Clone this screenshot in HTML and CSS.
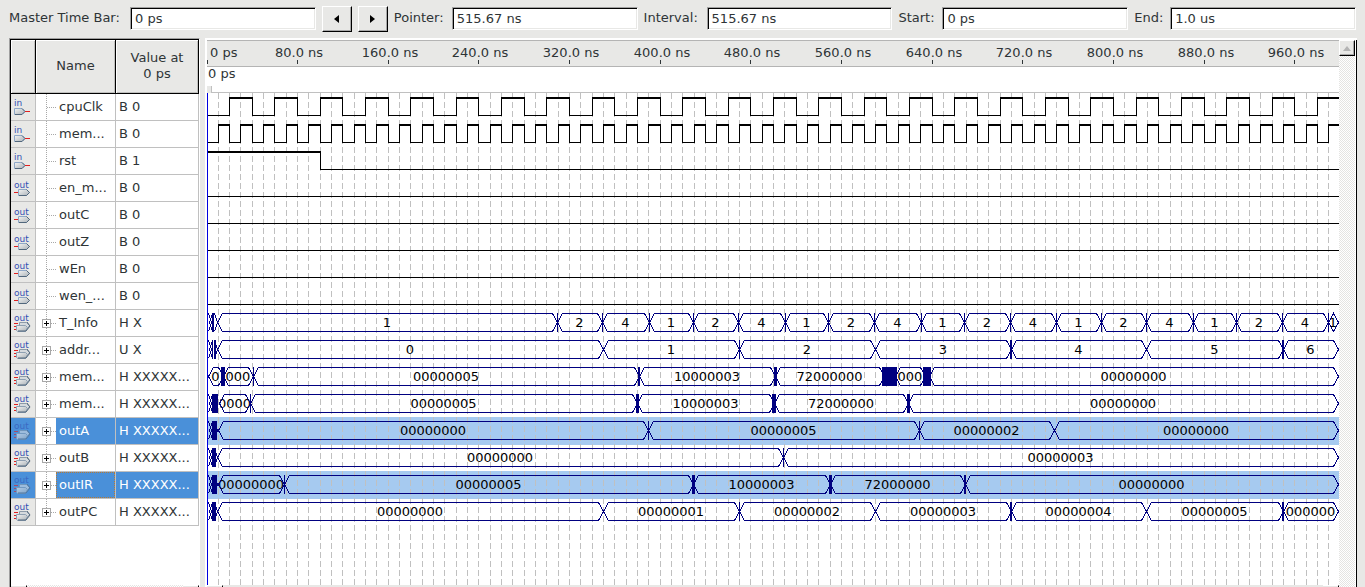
FILE: index.html
```html
<!DOCTYPE html>
<html lang="en">
<head>
<meta charset="utf-8">
<title>Waveform Viewer</title>
<link rel="stylesheet" href="styles.css">
</head>
<body>
<svg class="defs" aria-hidden="true">
  <defs>
    <linearGradient id="metal" x1="0" y1="0" x2="1" y2="1">
      <stop offset="0" stop-color="#f4f4f2"/>
      <stop offset="1" stop-color="#a9b1b8"/>
    </linearGradient>
    <symbol id="pin-in" viewBox="0 0 18 20">
      <text x="0" y="9" class="pin-text">in</text>
      <path d="M.5 11.500h7.500l3 3-3 3H.5z" fill="url(#metal)" stroke="#8fa8c8"/>
      <path d="M8 11.500l3 3-3 3H1" fill="none" stroke="#51677c"/>
      <path d="M11 14.500h5" stroke="#e02020"/>
    </symbol>
    <symbol id="pin-out" viewBox="0 0 18 20">
      <text x="0" y="10" class="pin-text">out</text>
      <path d="M4.500 11.500h8l3 3-3 3h-8z" fill="url(#metal)" stroke="#8fa8c8"/>
      <path d="M12.500 11.500l3 3-3 3H5" fill="none" stroke="#51677c"/>
      <path d="M0 14.500h4" stroke="#e02020"/>
    </symbol>
    <symbol id="pin-bus" viewBox="0 0 18 20">
      <text x="0" y="8" class="pin-text">out</text>
      <path d="M5.500 9.500h7l3 3-3 4h-7z" fill="#d5dade" stroke="#8c9aa8"/>
      <path d="M2.500 12.500h9l2 2-2 4h-8l-1-1z" fill="url(#metal)" stroke="#8ea0b2"/>
      <path d="M12 18l4-5-3-4M12 18H4" fill="none" stroke="#51677c"/>
      <path d="M0 10.500h4M0 13.500h2M0 16.500h2" stroke="#e02020"/>
    </symbol>
  </defs>
</svg>

<form class="toolbar">
  <label for="master">Master Time Bar:</label>
  <input id="master" type="text" value="0 ps">
  <button type="button" aria-label="Previous transition"><svg width="5" height="8"><path d="M5 0v8L0 4z"/></svg></button>
  <button type="button" aria-label="Next transition"><svg width="5" height="8"><path d="M0 0v8l5-4z"/></svg></button>
  <label for="pointer">Pointer:</label>
  <input id="pointer" type="text" value="515.67 ns">
  <label for="interval">Interval:</label>
  <input id="interval" type="text" value="515.67 ns">
  <label for="start">Start:</label>
  <input id="start" type="text" value="0 ps">
  <label for="end">End:</label>
  <input id="end" type="text" value="1.0 us">
</form>

<main class="workspace">
  <section class="signals">
    <table>
      <thead>
        <tr><th class="col-icon"></th><th class="col-name">Name</th><th class="col-value">Value at<br>0 ps</th></tr>
      </thead>
      <tbody>
        <tr><td class="icon"><svg><use href="#pin-in"/></svg></td><td><div class="node"><i class="branch"></i><span>cpuClk</span></div></td><td class="value">B 0</td></tr>
        <tr><td class="icon"><svg><use href="#pin-in"/></svg></td><td><div class="node"><i class="branch"></i><span>mem...</span></div></td><td class="value">B 0</td></tr>
        <tr><td class="icon"><svg><use href="#pin-in"/></svg></td><td><div class="node"><i class="branch"></i><span>rst</span></div></td><td class="value">B 1</td></tr>
        <tr><td class="icon"><svg><use href="#pin-out"/></svg></td><td><div class="node"><i class="branch"></i><span>en_m...</span></div></td><td class="value">B 0</td></tr>
        <tr><td class="icon"><svg><use href="#pin-out"/></svg></td><td><div class="node"><i class="branch"></i><span>outC</span></div></td><td class="value">B 0</td></tr>
        <tr><td class="icon"><svg><use href="#pin-out"/></svg></td><td><div class="node"><i class="branch"></i><span>outZ</span></div></td><td class="value">B 0</td></tr>
        <tr><td class="icon"><svg><use href="#pin-out"/></svg></td><td><div class="node"><i class="branch"></i><span>wEn</span></div></td><td class="value">B 0</td></tr>
        <tr><td class="icon"><svg><use href="#pin-out"/></svg></td><td><div class="node"><i class="branch"></i><span>wen_...</span></div></td><td class="value">B 0</td></tr>
        <tr><td class="icon"><svg><use href="#pin-bus"/></svg></td><td><div class="node"><button class="branch expand" type="button" aria-label="Expand"></button><span>T_Info</span></div></td><td class="value">H X</td></tr>
        <tr><td class="icon"><svg><use href="#pin-bus"/></svg></td><td><div class="node"><button class="branch expand" type="button" aria-label="Expand"></button><span>addr...</span></div></td><td class="value">U X</td></tr>
        <tr><td class="icon"><svg><use href="#pin-bus"/></svg></td><td><div class="node"><button class="branch expand" type="button" aria-label="Expand"></button><span>mem...</span></div></td><td class="value">H XXXXX...</td></tr>
        <tr><td class="icon"><svg><use href="#pin-bus"/></svg></td><td><div class="node"><button class="branch expand" type="button" aria-label="Expand"></button><span>mem...</span></div></td><td class="value">H XXXXX...</td></tr>
        <tr class="selected"><td class="icon"><svg><use href="#pin-bus"/></svg></td><td><div class="node"><button class="branch expand" type="button" aria-label="Expand"></button><span>outA</span></div></td><td class="value">H XXXXX...</td></tr>
        <tr><td class="icon"><svg><use href="#pin-bus"/></svg></td><td><div class="node"><button class="branch expand" type="button" aria-label="Expand"></button><span>outB</span></div></td><td class="value">H XXXXX...</td></tr>
        <tr class="selected focused"><td class="icon"><svg><use href="#pin-bus"/></svg></td><td><div class="node"><button class="branch expand" type="button" aria-label="Expand"></button><span>outIR</span></div></td><td class="value">H XXXXX...</td></tr>
        <tr><td class="icon"><svg><use href="#pin-bus"/></svg></td><td><div class="node"><button class="branch expand last" type="button" aria-label="Expand"></button><span>outPC</span></div></td><td class="value">H XXXXX...</td></tr>
      </tbody>
    </table>
    <div class="hscroll"><i class="thumb"></i><i class="track"></i><i class="thumb"></i></div>
  </section>

  <section class="viewer">
    <div class="canvas">
      <svg class="ruler" id="ruler"></svg>
      <div class="timebar">0 ps<i class="handle"></i></div>
      <svg class="waves" id="waves"></svg>
      <div class="hscroll"><i class="thumb"></i><i class="spacer"></i><i class="thumb"></i></div>
    </div>
    <div class="vscroll"><button type="button" aria-label="Scroll up"><svg width="8" height="5"><path d="M0 5h8L4 0z"/></svg></button></div>
  </section>
</main>
<script src="waves.js"></script>
</body>
</html>
```

FILE: styles.css
```css
*, *::before { box-sizing: border-box; }

body {
  display: flex;
  flex-direction: column;
  height: 100vh;
  margin: 0;
  overflow: hidden;
  background: #e8e8e6;
  color: #2e3436;
  font: 13px/16px "DejaVu Sans", sans-serif;
}

.defs { position: absolute; width: 0; height: 0; }
.pin-text { font: 9px "DejaVu Sans", sans-serif; fill: #3450b4; }

.toolbar {
  display: grid;
  grid-template-columns: 115px 1fr 30px 30px 52px 1fr 57px 1fr 38px 1fr 30px 1fr;
  gap: 6px;
  align-items: center;
  height: 38px;
  margin: 0;
  padding: 0 9px;
}
.toolbar label { margin-bottom: 2px; white-space: nowrap; }
.toolbar input {
  width: 100%;
  min-width: 0;
  height: 23px;
  margin: 0 0 1px;
  padding: 0 4px 1px;
  border: 1px solid;
  border-color: #a0a0a0 #fff #fff #a0a0a0;
  border-radius: 0;
  outline: 0;
  background: #fff;
  box-shadow: inset 1px 1px #000, inset -1px -1px #e8e8e6;
  color: inherit;
  font: inherit;
}
.toolbar button {
  display: flex;
  align-items: center;
  justify-content: center;
  height: 26px;
  padding: 0;
  border: 1px solid;
  border-color: #fff #000 #000 #fff;
  background: #e8e8e6;
  box-shadow: inset -1px -1px #a8a8a8;
}

.workspace {
  display: flex;
  flex: 1;
  gap: 5px;
  min-height: 0;
  padding: 0 8px 0 9px;
}

.signals {
  display: flex;
  flex-direction: column;
  width: 191px;
  border: 1px solid #a0a0a0;
  border-width: 1px 1px 0;
  border-right-color: #fff;
  box-shadow: inset 1px 1px #000;
  padding: 1px 0 0 1px;
  background: #fff;
  background-clip: content-box;
}
.signals table {
  width: 100%;
  table-layout: fixed;
  border-spacing: 0;
}
.signals th {
  height: 54px;
  padding: 0 0 2px;
  border-right: 1px solid #000;
  border-bottom: 1px solid #000;
  background: #e8e8e6;
  box-shadow: inset 1px 1px #fff, inset -1px -1px #c0c0be;
  font-weight: normal;
}
.col-icon { width: 25px; }
.col-name { width: 80px; }
.signals td {
  height: 27px;
  padding: 0;
  border-right: 1px solid #c0c0c0;
  border-bottom: 1px solid #c0c0c0;
  white-space: nowrap;
}
.icon { background: #e8e8e6; }
.icon svg { display: block; width: 18px; height: 20px; margin: 0 0 0 3px; }
.signals .value { padding-left: 3px; }
.node { display: flex; height: 26px; line-height: 26px; }
.node span { flex: 1; padding-left: 3px; }
.branch {
  position: relative;
  width: 20px;
  padding: 0;
  border: 0;
  background:
    repeating-linear-gradient(#a8a8a8 0 1px, transparent 1px 2px) 10px 0 / 1px 100% no-repeat,
    repeating-linear-gradient(90deg, #a8a8a8 0 1px, transparent 1px 2px) 11px 13px / 9px 1px no-repeat;
}
.branch.last { background-size: 1px 50%, 9px 1px; }
.expand::before {
  content: "";
  position: absolute;
  left: 6px;
  top: 9px;
  width: 9px;
  height: 9px;
  border: 1px solid #a8a8a8;
  background:
    linear-gradient(#000, #000) center / 5px 1px no-repeat,
    linear-gradient(#000, #000) center / 1px 5px no-repeat,
    #fff;
}
.selected .icon, .selected .value, .selected .node span { background: #4a90d9; color: #fff; }
.selected .icon svg { opacity: 0.6; }
.focused .node span { outline: 1px dotted #b57a35; outline-offset: -1px; }

.hscroll { display: flex; height: 2px; margin-top: auto; }
.thumb { width: 16px; border-right: 1px solid #000; background: #e8e8e6; border-top: 1px solid #fff; }
.track { flex: 1; background: repeating-conic-gradient(#e4e4e2 0 25%, #fff 0 50%) 0 0 / 2px 2px; }
.spacer { flex: 1; background: #e8e8e6; }

.viewer {
  display: flex;
  flex: 1;
  min-width: 0;
  border: solid #fff;
  border-width: 2px 0 0 2px;
  background: #fff;
  box-shadow: inset -1px 0 #000;
  padding-right: 2px;
}
.canvas {
  display: flex;
  flex: 1;
  flex-direction: column;
  min-width: 0;
}
.ruler {
  display: block;
  width: 100%;
  height: 27px;
  border-top: 1px solid #b4b4b4;
  border-bottom: 1px solid #b4b4b4;
  background: #e8e8e6;
}
.ruler text { fill: #2e3436; }
.ruler path { stroke: #2e3436; }
.timebar {
  position: relative;
  height: 26px;
  padding-left: 1px;
  border-bottom: 1px solid #c0c0c0;
  line-height: 14px;
}
.handle {
  position: absolute;
  left: 0;
  bottom: -1px;
  width: 5px;
  height: 7px;
  border-right: 1px solid #c0c0c0;
  background: #e8e8e6;
}
.waves { display: block; flex: 1; width: 100%; min-height: 0; }
.waves path, .waves rect, .ruler path { shape-rendering: crispEdges; }
.waves .row-selected { fill: #a6caf0; }
.waves .grid { stroke: #c0c0c0; stroke-dasharray: 6 3; }
.waves .low { fill: none; stroke: #000; }
.waves .high { fill: none; stroke: #000; stroke-width: 2; }
.waves .bus { fill: none; stroke: #000080; }
.waves .glitch { fill: #000080; }
.waves .master { stroke: #0000e0; }
.waves text { fill: #000; }

.vscroll {
  width: 16px;
  background: repeating-conic-gradient(#e4e4e2 0 25%, #fff 0 50%) 0 0 / 2px 2px;
}
.vscroll button {
  display: flex;
  align-items: center;
  justify-content: center;
  width: 16px;
  height: 16px;
  padding: 0;
  border: 1px solid;
  border-color: #fff #000 #000 #fff;
  background: #e8e8e6;
  box-shadow: inset -1px -1px #a8a8a8;
}
.vscroll path { fill: #b4b4b4; }
```

FILE: waves.js
```js
const NS = "http://www.w3.org/2000/svg";
const PX_PER_NS = 1.133;
const ROW = 27;
const HIGH = 4;
const LOW = 22;

const at = ns => Math.floor(ns * PX_PER_NS);

// Clocks toggle every `half` ns; levels drop from 1 to 0 at `fall`.
// Buses list their values, and between them the changes as [x, width of the glitch band].
const signals = [
  { half: 20 },
  { half: 10 },
  { fall: 100 },
  { fall: 0 }, { fall: 0 }, { fall: 0 }, { fall: 0 }, { fall: 0 },
  { start: 10, glitches: [[5, 2]], values: "1 2 4 1 2 4 1 2 4 1 2 4 1 2 4 1 2 4 1",
    changes: [[350, 1], [395, 1], [442, 1], [486, 1], [531, 1], [578, 1], [621, 1], [667, 1], [714, 1], [757, 1], [803, 1], [849, 1], [894, 1], [939, 1], [986, 1], [1029, 1], [1075, 1], [1121, 1]] },
  { start: 10, glitches: [[5, 1], [7, 2]], values: "0 1 2 3 4 5 6",
    changes: [[396, 0], [532, 1], [668, 0], [803, 2], [939, 0], [1075, 2]] },
  { start: 1, glitches: [], values: "0 000 00000005 10000003 72000000 000 00000000",
    changes: [[14, 4], [46, 1], [431, 2], [567, 3], [675, 15], [716, 8]] },
  { start: 12, glitches: [[5, 6]], values: "0000 00000005 10000003 72000000 00000000",
    changes: [[43, 1], [429, 3], [565, 4], [700, 3]] },
  { start: 11, selected: true, glitches: [[5, 5]], values: "00000000 00000005 00000002 00000000",
    changes: [[441, 1], [712, 1], [847, 0]] },
  { start: 10, glitches: [[5, 4]], values: "00000000 00000003", changes: [[576, 1]] },
  { start: 11, selected: true, glitches: [[5, 5]], values: "00000000 00000005 10000003 72000000 00000000",
    changes: [[77, 1], [485, 3], [622, 3], [757, 2]] },
  { start: 10, glitches: [[5, 4]], values: "00000000 00000001 00000002 00000003 00000004 00000005 000000",
    changes: [[396, 0], [532, 1], [668, 0], [803, 2], [939, 0], [1075, 2]] }
];

function add(parent, tag, attrs, text) {
  const el = document.createElementNS(NS, tag);
  for (const key in attrs) el.setAttribute(key, attrs[key]);
  if (text !== undefined) el.textContent = text;
  parent.append(el);
  return el;
}

function drawRuler(svg, width) {
  svg.replaceChildren();
  add(svg, "text", { x: 3, y: 16 }, "0 ps");
  add(svg, "path", { d: "M.5 19v4" });
  for (let ns = 80; at(ns) < width; ns += 80) {
    add(svg, "text", { x: at(ns) + 2, y: 16, "text-anchor": "middle" }, ns.toFixed(1) + " ns");
    add(svg, "path", { d: `M${at(ns) + 0.5} 19v4` });
  }
}

function drawLevel(svg, top, edges, level, width) {
  let low = "", high = "", x = 0;
  for (const edge of [...edges, width]) {
    if (level) high += `M${x} ${top + HIGH}H${edge + 1}`;
    else low += `M${x} ${top + LOW - 0.5}H${edge + 1}`;
    if (edge > 0 && edge < width) low += `M${edge + 0.5} ${top + HIGH - 1}V${top + LOW}`;
    level = !level;
    x = edge;
  }
  add(svg, "path", { class: "low", d: low });
  add(svg, "path", { class: "high", d: high });
}

function drawBus(svg, top, signal, width) {
  const y1 = top + 3.5, y2 = top + 21.5, mid = top + 12.5;
  const labels = signal.values.split(" ");
  let x = signal.start, d = "";
  if (x > 4) d += `M1.5 ${y1}l3 9l-3 9M5.5 ${y1}l-3 9l3 9M7.5 ${y1}l3 9l-3 9`;
  for (const [gx, gw] of signal.glitches) add(svg, "rect", { class: "glitch", x: gx, y: top + 3, width: gw, height: 19 });
  labels.forEach((label, i) => {
    const [edge, band] = signal.changes[i] || [width - 1, 0];
    // The slanted ends meet inside the glitch band.
    const overlap = Math.min(2, Math.floor(band / 2));
    const end = edge + overlap;
    const s = Math.min(5, (end - x) / 2);
    d += `M${x + 0.5} ${mid}L${x + s + 0.5} ${y1}H${end - s + 0.5}L${end + 0.5} ${mid}L${end - s + 0.5} ${y2}H${x + s + 0.5}Z`;
    const view = add(svg, "svg", { x: x + 1, y: top, width: Math.max(0, end - x - 1), height: ROW });
    add(view, "text", { x: (end - x - 2) / 2, y: 17, "text-anchor": "middle" }, label);
    if (band) add(svg, "rect", { class: "glitch", x: edge, y: top + 3, width: band, height: 19 });
    x = band > 4 ? edge + band - 2 : end;
  });
  add(svg, "path", { class: "bus", d });
}

function drawWaves(svg, width, height) {
  svg.replaceChildren();
  signals.forEach((s, i) => {
    if (s.selected) add(svg, "rect", { class: "row-selected", x: 0, y: i * ROW, width, height: ROW + 1 });
  });
  for (let ns = 10; at(ns) < width; ns += 10) {
    add(svg, "path", { class: "grid", d: `M${at(ns) + 0.5} 0V${height}` });
  }
  signals.forEach((s, i) => {
    const top = 1 + i * ROW;
    if (s.values) return drawBus(svg, top, s, width);
    const edges = [];
    if (s.half) for (let ns = s.half; at(ns) < width; ns += s.half) edges.push(at(ns));
    else if (s.fall) edges.push(at(s.fall));
    drawLevel(svg, top, edges, Boolean(s.fall), width);
  });
  add(svg, "path", { class: "master", d: `M.5 0V${height}` });
}

function draw() {
  const ruler = document.getElementById("ruler");
  const waves = document.getElementById("waves");
  const box = waves.getBoundingClientRect();
  drawRuler(ruler, box.width);
  drawWaves(waves, box.width, box.height);
}

window.addEventListener("resize", draw);
draw();
```
